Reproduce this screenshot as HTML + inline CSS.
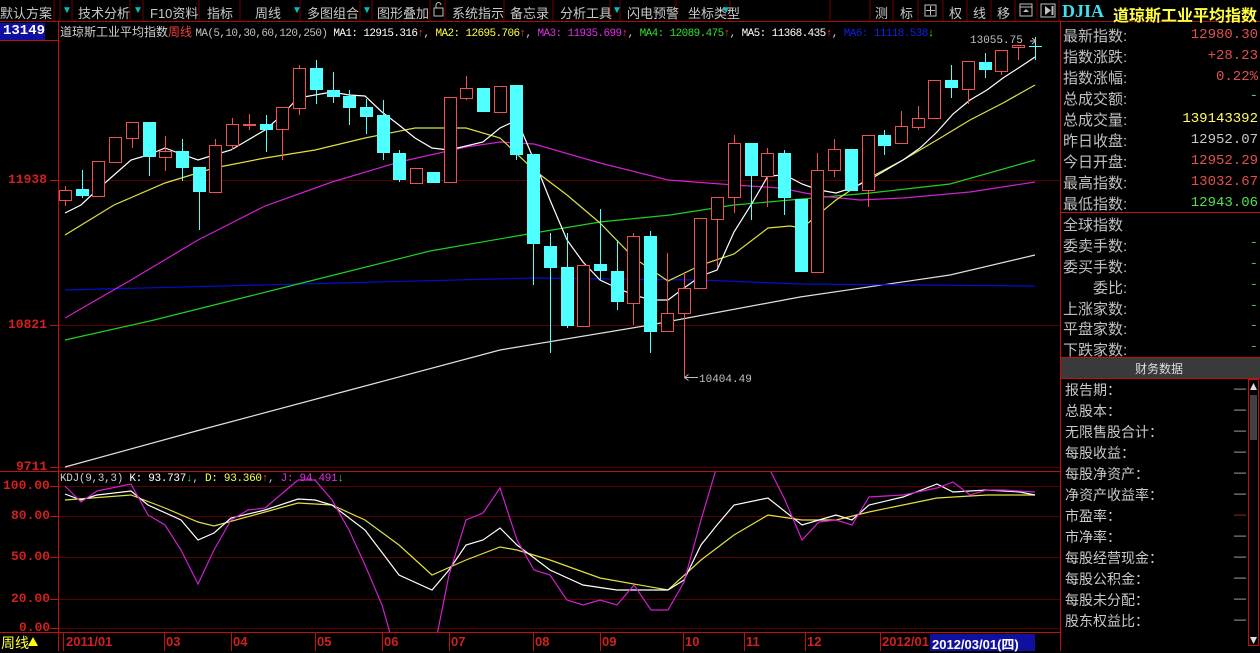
<!DOCTYPE html>
<html><head><meta charset="utf-8"><style>
*{margin:0;padding:0;box-sizing:border-box}
body{width:1260px;height:651px;background:#000;overflow:hidden;font-family:"Liberation Sans","Noto Sans CJK SC","WenQuanYi Zen Hei",sans-serif;position:relative;color:#c0c0c0}
.a{position:absolute;white-space:nowrap}
.tb{font-size:13px;color:#c8c8c8;top:3px}
.tri{color:#00c0c0;font-size:10px;top:5px}
.rl{font-size:15px;color:#c0c0c0;left:1063px}
.rv{font-size:14px;right:2px;font-family:"Liberation Mono",monospace}
.fl{font-size:14px;color:#c8c8c8;left:1065px}
.fd{left:1234px;color:#c0c0c0;font-size:12px}
.ax{font-family:"Liberation Mono",monospace;font-size:13px;color:#d02020;font-weight:bold}
.dt{font-family:"Liberation Sans",sans-serif;font-size:13px;color:#d02020;font-weight:bold;top:634px}
.mo{font-family:"Liberation Mono",monospace;font-size:11px;letter-spacing:-0.6px}
</style></head><body>
<svg width="1260" height="651" style="position:absolute;left:0;top:0">
<line x1="0" y1="21.5" x2="1260" y2="21.5" stroke="#a01010"/>
<g stroke="#700000">
<line x1="54" y1="0" x2="54" y2="21"/><line x1="60" y1="0" x2="60" y2="21"/><line x1="72" y1="0" x2="72" y2="21"/>
<line x1="130" y1="0" x2="130" y2="21"/><line x1="143" y1="0" x2="143" y2="21"/><line x1="199" y1="0" x2="199" y2="21"/>
<line x1="240" y1="0" x2="240" y2="21"/><line x1="300" y1="0" x2="300" y2="21"/><line x1="360" y1="0" x2="360" y2="21"/>
<line x1="372" y1="0" x2="372" y2="21"/><line x1="430" y1="0" x2="430" y2="21"/><line x1="445" y1="0" x2="445" y2="21"/>
<line x1="504" y1="0" x2="504" y2="21"/><line x1="553" y1="0" x2="553" y2="21"/><line x1="610" y1="0" x2="610" y2="21"/>
<line x1="620" y1="0" x2="620" y2="21"/><line x1="676" y1="0" x2="676" y2="21"/><line x1="730" y1="0" x2="730" y2="21"/>
<line x1="830" y1="0" x2="830" y2="21"/><line x1="870" y1="0" x2="870" y2="21"/><line x1="893" y1="0" x2="893" y2="21"/>
<line x1="918" y1="0" x2="918" y2="21"/><line x1="943" y1="0" x2="943" y2="21"/><line x1="967" y1="0" x2="967" y2="21"/>
<line x1="991" y1="0" x2="991" y2="21"/><line x1="1015" y1="0" x2="1015" y2="21"/><line x1="1037" y1="0" x2="1037" y2="21"/><line x1="1059" y1="0" x2="1059" y2="21"/>
</g>
<rect x="925" y="5" width="11" height="11" fill="none" stroke="#c0c0c0"/><line x1="930.5" y1="6" x2="930.5" y2="15" stroke="#c0c0c0"/><line x1="926" y1="10.5" x2="935" y2="10.5" stroke="#c0c0c0"/>
<rect x="1020" y="4" width="12" height="12" fill="none" stroke="#c0c0c0"/><line x1="1020" y1="7" x2="1032" y2="7" stroke="#c0c0c0"/><path d="M1023 12 L1026 9 L1029 12Z" fill="#c0c0c0"/>
<rect x="1041" y="4" width="14" height="13" fill="none" stroke="#c0c0c0"/><path d="M1045 6 L1051 10.5 L1045 15Z" fill="#c0c0c0"/><line x1="1052.5" y1="6" x2="1052.5" y2="15" stroke="#c0c0c0" stroke-width="2"/>
<rect x="434" y="8" width="9" height="8" fill="none" stroke="#c0c0c0"/><path d="M436 8 V5 a2.5 2.5 0 0 1 5 0" fill="none" stroke="#c0c0c0"/>
<line x1="58.5" y1="21" x2="58.5" y2="651" stroke="#c01010"/>
<line x1="0" y1="40.5" x2="58" y2="40.5" stroke="#c01010"/>
<line x1="0" y1="471.5" x2="1060" y2="471.5" stroke="#c01010"/>
<line x1="0" y1="632.5" x2="1060" y2="632.5" stroke="#c01010"/>
<line x1="1060.5" y1="21" x2="1060.5" y2="651" stroke="#c01010"/>
<line x1="1060" y1="212.5" x2="1260" y2="212.5" stroke="#c01010"/>
<line x1="1060" y1="357.5" x2="1260" y2="357.5" stroke="#c01010"/>
<rect x="1061" y="358" width="199" height="20" fill="#3a3a3a"/>
<line x1="1060" y1="378.5" x2="1260" y2="378.5" stroke="#c01010"/>
<rect x="1248.5" y="379.5" width="10" height="266" fill="none" stroke="#c01010"/>
<rect x="1250" y="395" width="7" height="45" fill="#404040"/>
<path d="M1250 390 L1253.5 383 L1257 390Z" fill="#ddd"/><path d="M1250 637 L1253.5 644 L1257 637Z" fill="#ddd"/>
<g stroke="#5a0000">
<line x1="59" y1="180.5" x2="1060" y2="180.5"/><line x1="59" y1="325.5" x2="1060" y2="325.5"/><line x1="59" y1="467.5" x2="1060" y2="467.5"/>
<line x1="59" y1="486.5" x2="1060" y2="486.5"/><line x1="59" y1="516.5" x2="1060" y2="516.5"/><line x1="59" y1="557.5" x2="1060" y2="557.5"/>
<line x1="59" y1="599.5" x2="1060" y2="599.5"/><line x1="59" y1="628.5" x2="1060" y2="628.5"/>
</g>
<g stroke="#c01010"><line x1="50" y1="180.5" x2="58" y2="180.5"/><line x1="50" y1="325.5" x2="58" y2="325.5"/><line x1="50" y1="467.5" x2="58" y2="467.5"/>
<line x1="50" y1="486.5" x2="58" y2="486.5"/><line x1="50" y1="516.5" x2="58" y2="516.5"/><line x1="50" y1="557.5" x2="58" y2="557.5"/><line x1="50" y1="599.5" x2="58" y2="599.5"/><line x1="50" y1="628.5" x2="58" y2="628.5"/></g>
<rect x="0" y="23" width="45" height="17" fill="#1010a0"/>
<g stroke="#c01010" fill="none">
<line x1="63.5" y1="633" x2="63.5" y2="651"/><line x1="164.5" y1="633" x2="164.5" y2="651"/><line x1="231.5" y1="633" x2="231.5" y2="651"/><line x1="315.5" y1="633" x2="315.5" y2="651"/><line x1="382.5" y1="633" x2="382.5" y2="651"/><line x1="449.5" y1="633" x2="449.5" y2="651"/><line x1="533.5" y1="633" x2="533.5" y2="651"/><line x1="600.5" y1="633" x2="600.5" y2="651"/><line x1="683.5" y1="633" x2="683.5" y2="651"/><line x1="744.5" y1="633" x2="744.5" y2="651"/><line x1="805.5" y1="633" x2="805.5" y2="651"/><line x1="880.5" y1="633" x2="880.5" y2="651"/>
</g>
<rect x="930" y="634" width="105" height="17" fill="#1010a0"/>
<path d="M28 646 L33 637 L38 646Z" fill="#ffff00"/>
<g fill="none" stroke-width="1.2">
<polyline stroke="#e0e0e0" points="65,467 200,430 350,390 500,350 650,325 800,297 950,275 1035,255"/>
<polyline stroke="#0010d0" points="65,290 300,284 534,278 700,280 800,284 1035,286"/>
<polyline stroke="#20d020" points="65,340 150,321 250,296 330,276 430,251 534,233 600,222 670,215 734,205 802,199 870,193 950,184 1035,160"/>
<polyline stroke="#d020d0" points="65,318 131,280 198,240 265,206 332,182 399,162 466,147 500,142 534,144 600,163 668,180 734,185 780,188 820,196 860,200 903,198 970,192 1035,182"/>
<polyline stroke="#e0e040" points="65,235 114,205 165,183 214,168 265,158 315,150 365,138 415,128 466,128 500,138 534,170 567,195 600,223 634,258 668,281 701,265 734,254 768,228 790,226 802,228 836,200 869,178 903,160 937,140 970,120 1003,103 1035,85"/>
<polyline stroke="#ffffff" points="65,213 81,205 97,190 114,175 131,160 148,155 165,148 181,154 198,160 214,155 231,150 248,140 265,130 281,116 298,98 315,95 332,92 349,95 365,96 382,112 399,125 415,138 432,148 449,150 466,146 483,142 500,128 517,120 534,160 550,200 567,240 583,262 600,280 617,288 634,295 651,300 668,300 684,288 701,276 717,270 734,232 751,205 768,176 785,175 802,184 819,190 836,193 852,188 869,180 886,170 903,160 920,148 937,132 953,114 970,100 987,90 1003,78 1020,67 1035,57"/>
</g>
<g id="cd"></g>
<text x="970" y="43" font-family="Liberation Mono,monospace" font-size="11" fill="#c0c0c0">13055.75</text>
<path d="M1030 41 H1036 M1036 41 l-4 -3 M1036 41 l-4 3" stroke="#c0c0c0" fill="none"/>
<path d="M684.5 377.5 H698 M684.5 377.5 l4 -3 M684.5 377.5 l4 3" stroke="#c0c0c0" fill="none"/>
<text x="699" y="382" font-family="Liberation Mono,monospace" font-size="11" fill="#c0c0c0">10404.49</text>
<svg x="59" y="472" width="1001" height="160" overflow="hidden">
<g transform="translate(-59,-472)" fill="none" stroke-width="1.2">
<polyline stroke="#e0e040" points="65,500 131,495 165,508 198,522 214,526 265,512 298,503 332,505 365,520 399,545 432,575 466,560 500,547 517,550 550,560 600,578 668,590 701,560 734,535 768,515 802,520 836,520 869,512 903,505 937,498 987,495 1035,495"/>
<polyline stroke="#ffffff" points="65,494 81,500 97,495 131,491 148,505 181,520 198,540 214,533 231,518 265,510 298,499 315,500 332,505 365,530 399,575 432,590 449,570 466,545 483,540 500,528 517,545 550,570 583,585 617,590 651,590 668,590 684,580 701,545 717,525 734,505 768,498 802,525 819,520 836,515 852,520 869,505 903,497 937,484 953,492 987,490 1020,492 1035,495"/>
<polyline stroke="#d020d0" points="65,486 81,502 97,491 131,484 148,515 165,525 181,550 198,584 214,550 231,520 248,510 265,508 298,480 315,480 332,500 349,530 365,565 382,605 392,640 436,640 449,575 466,520 483,513 500,488 517,540 534,570 550,575 567,600 583,605 600,600 617,605 634,585 651,610 668,610 684,582 701,520 717,466 768,466 785,500 802,540 819,522 836,520 852,525 869,497 903,495 937,488 953,482 970,495 987,490 1003,490 1035,492"/>
</g></svg>
</svg>
<script>
var d=[["r",190,200,186,206],["c",189,196,170,198],["r",161,196,161,196],["r",137,162,137,162],["r",122,138,122,148],["c",122,157,122,176],["r",151,157,136,171],["c",151,168,139,181],["c",167,192,167,230],["r",145,192,139,192],["r",124,145,118,150],["r",124,125,114,130],["c",124,130,115,152],["r",107,129,107,160],["r",68,108,65,115],["c",68,90,60,104],["c",90,97,72,103],["c",96,108,90,125],["c",107,117,99,134],["c",115,153,100,160],["c",153,180,150,182],["r",168,183,168,183],["c",172,183,172,183],["r",97,182,97,182],["r",88,98,76,100],["c",88,112,88,112],["r",86,112,86,112],["c",85,155,85,160],["c",154,244,154,285],["c",246,268,233,353],["c",267,326,233,328],["r",265,326,265,326],["c",264,271,209,280],["c",271,302,240,310],["r",236,303,233,325],["c",236,332,231,353],["r",313,331,253,331],["r",288,313,272,378],["r",218,288,218,288],["r",197,219,197,267],["r",143,197,135,213],["c",143,176,143,220],["r",153,176,148,207],["c",153,198,150,215],["c",199,272,199,272],["r",170,272,153,272],["r",149,170,139,177],["c",149,191,149,191],["r",135,190,135,207],["c",135,146,130,155],["r",126,143,111,143],["r",118,127,106,130],["r",80,118,80,118],["c",80,88,65,98],["r",61,89,61,104],["c",62,70,53,78],["r",50,71,50,75],["r",45,47,45,60],["c",46,47,37,60]];
var s="";d.forEach(function(k,i){var x=Math.round(65+i*16.72);var col=k[0]=="r"?"#f05050":"#50ffff";
s+='<line x1="'+(x+.5)+'" y1="'+k[3]+'" x2="'+(x+.5)+'" y2="'+k[4]+'" stroke="'+col+'"/>';
if(k[0]=="r")s+='<rect x="'+(x-5.5)+'" y="'+(k[1]+.5)+'" width="12" height="'+Math.max(1,k[2]-k[1])+'" fill="#000" stroke="'+col+'"/>';
else s+='<rect x="'+(x-6)+'" y="'+k[1]+'" width="13" height="'+Math.max(1,k[2]-k[1])+'" fill="'+col+'"/>';});
document.getElementById("cd").innerHTML=s;
</script>
<div class="a tb" style="left:0">默认方案</div><div class="a tri" style="left:62px">▼</div>
<div class="a tb" style="left:78px">技术分析</div><div class="a tri" style="left:133px">▼</div>
<div class="a tb" style="left:150px">F10资料</div>
<div class="a tb" style="left:207px">指标</div>
<div class="a tb" style="left:255px">周线</div><div class="a tri" style="left:292px">▼</div>
<div class="a tb" style="left:307px">多图组合</div><div class="a tri" style="left:362px">▼</div>
<div class="a tb" style="left:377px">图形叠加</div>
<div class="a tb" style="left:452px">系统指示</div>
<div class="a tb" style="left:510px">备忘录</div>
<div class="a tb" style="left:560px">分析工具</div><div class="a tri" style="left:612px">▼</div>
<div class="a tb" style="left:627px">闪电预警</div>
<div class="a tb" style="left:688px">坐标类型</div><div class="a tri" style="left:721px">▼</div>
<div class="a tb" style="left:875px">测</div><div class="a tb" style="left:900px">标</div><div class="a tb" style="left:949px">权</div><div class="a tb" style="left:973px">线</div><div class="a tb" style="left:997px">移</div>
<div class="a" style="left:1062px;top:1px;font-size:18px;font-weight:bold;font-family:'Liberation Serif',serif;color:#40e0f0">DJIA</div>
<div class="a" style="left:1113px;top:2px;font-size:16px;font-weight:bold;color:#ffff40">道琼斯工业平均指数</div>
<div class="a" style="left:3px;top:23px;font-size:14px;font-weight:bold;color:#fff;font-family:'Liberation Mono',monospace">13149</div>
<div class="a" style="left:60px;top:23px;font-size:12px"><span style="color:#d0d0d0">道琼斯工业平均指数</span><span style="color:#f04040">周线</span> <span class="mo"><span style="color:#c0c0c0">MA(5,10,30,60,120,250)</span> <span style="color:#fff">MA1: 12915.316</span><span style="color:#f04040">↑</span><span style="color:#ccc">,</span> <span style="color:#ffff40">MA2: 12695.706</span><span style="color:#f04040">↑</span><span style="color:#ccc">,</span> <span style="color:#e030e0">MA3: 11935.699</span><span style="color:#f04040">↑</span><span style="color:#ccc">,</span> <span style="color:#30e030">MA4: 12089.475</span><span style="color:#f04040">↑</span><span style="color:#ccc">,</span> <span style="color:#fff">MA5: 11368.435</span><span style="color:#f04040">↑</span><span style="color:#ccc">,</span> <span style="color:#1020e0">MA6: 11118.538</span><span style="color:#30e030">↓</span></span></div>
<div class="a ax" style="left:8px;top:172px">11938</div>
<div class="a ax" style="left:8px;top:317px">10821</div>
<div class="a ax" style="left:16px;top:459px">9711</div>
<div class="a ax" style="left:3px;top:478px">100.00</div>
<div class="a ax" style="left:11px;top:508px">80.00</div>
<div class="a ax" style="left:11px;top:549px">50.00</div>
<div class="a ax" style="left:11px;top:591px">20.00</div>
<div class="a ax" style="left:19px;top:620px">0.00</div>
<div class="a mo" style="left:60px;top:473px;letter-spacing:-0.3px"><span style="color:#ccc">KDJ(9,3,3)</span> <span style="color:#fff">K: 93.737</span><span style="color:#30e030">↓</span><span style="color:#ccc">,</span> <span style="color:#ffff40">D: 93.360</span><span style="color:#f04040">↑</span><span style="color:#ccc">,</span> <span style="color:#e030e0">J: 94.491</span><span style="color:#30e030">↓</span></div>
<div class="a" style="left:1px;top:633px;font-size:14px;color:#ffff40">周线</div>
<div class="a dt" style="left:66px">2011/01</div><div class="a dt" style="left:166px">03</div><div class="a dt" style="left:233px">04</div><div class="a dt" style="left:317px">05</div><div class="a dt" style="left:384px">06</div><div class="a dt" style="left:451px">07</div><div class="a dt" style="left:535px">08</div><div class="a dt" style="left:602px">09</div><div class="a dt" style="left:685px">10</div><div class="a dt" style="left:746px">11</div><div class="a dt" style="left:807px">12</div><div class="a dt" style="left:882px">2012/01</div>
<div class="a" style="left:932px;top:634px;font-size:13px;font-weight:bold;color:#fff">2012/03/01(四)</div>
<div class="a rl" style="top:25px">最新指数:</div><div class="a rv" style="top:27px;color:#e05050">12980.30</div>
<div class="a rl" style="top:46px">指数涨跌:</div><div class="a rv" style="top:48px;color:#e05050">+28.23</div>
<div class="a rl" style="top:67px">指数涨幅:</div><div class="a rv" style="top:69px;color:#e05050">0.22%</div>
<div class="a rl" style="top:88px">总成交额:</div><div class="a rv" style="top:88px;color:#40c0c0">-</div>
<div class="a rl" style="top:109px">总成交量:</div><div class="a rv" style="top:111px;color:#ffff60">139143392</div>
<div class="a rl" style="top:130px">昨日收盘:</div><div class="a rv" style="top:132px;color:#c8c8c8">12952.07</div>
<div class="a rl" style="top:151px">今日开盘:</div><div class="a rv" style="top:153px;color:#e05050">12952.29</div>
<div class="a rl" style="top:172px">最高指数:</div><div class="a rv" style="top:174px;color:#e05050">13032.67</div>
<div class="a rl" style="top:193px">最低指数:</div><div class="a rv" style="top:195px;color:#50e050">12943.06</div>
<div class="a rl" style="top:214px">全球指数</div>
<div class="a rl" style="top:235px">委卖手数:</div><div class="a rv" style="top:235px;color:#40c040">-</div>
<div class="a rl" style="top:256px">委买手数:</div><div class="a rv" style="top:256px;color:#40c040">-</div>
<div class="a rl" style="top:277px;left:1093px">委比:</div><div class="a rv" style="top:277px;color:#40c040">-</div>
<div class="a rl" style="top:298px">上涨家数:</div><div class="a rv" style="top:298px;color:#40c040">-</div>
<div class="a rl" style="top:318px">平盘家数:</div><div class="a rv" style="top:318px;color:#40c040">-</div>
<div class="a rl" style="top:339px">下跌家数:</div><div class="a rv" style="top:339px;color:#40c040">-</div>
<div class="a" style="left:1135px;top:360px;font-size:12px;color:#ddd">财务数据</div>
<div class="a fl" style="top:380px">报告期：</div><div class="a fd" style="top:381px">—</div>
<div class="a fl" style="top:401px">总股本：</div><div class="a fd" style="top:402px">—</div>
<div class="a fl" style="top:422px">无限售股合计：</div><div class="a fd" style="top:423px">—</div>
<div class="a fl" style="top:443px">每股收益：</div><div class="a fd" style="top:444px">—</div>
<div class="a fl" style="top:464px">每股净资产：</div><div class="a fd" style="top:465px">—</div>
<div class="a fl" style="top:485px">净资产收益率：</div><div class="a fd" style="top:486px">—</div>
<div class="a fl" style="top:506px">市盈率：</div><div class="a fd" style="top:507px;color:#c03030">—</div>
<div class="a fl" style="top:527px">市净率：</div><div class="a fd" style="top:528px">—</div>
<div class="a fl" style="top:548px">每股经营现金：</div><div class="a fd" style="top:549px">—</div>
<div class="a fl" style="top:569px">每股公积金：</div><div class="a fd" style="top:570px">—</div>
<div class="a fl" style="top:590px">每股未分配：</div><div class="a fd" style="top:591px">—</div>
<div class="a fl" style="top:611px">股东权益比：</div><div class="a fd" style="top:612px">—</div>
</body></html>
